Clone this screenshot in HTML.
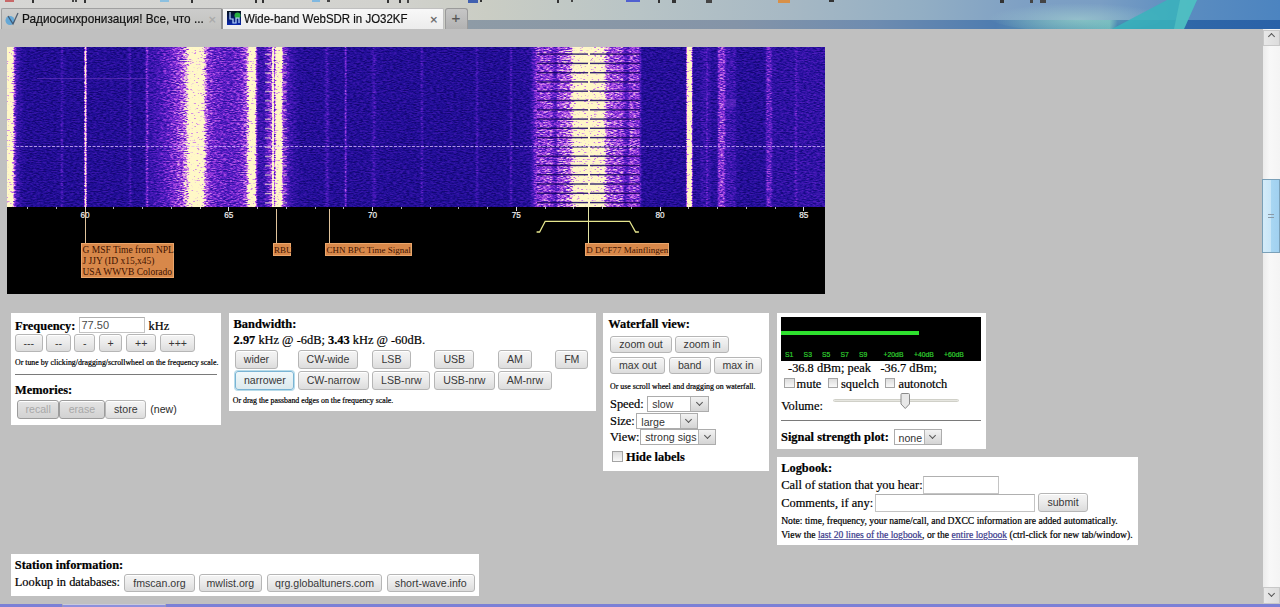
<!DOCTYPE html><html><head><meta charset="utf-8"><style>
*{margin:0;padding:0;box-sizing:border-box}
html,body{width:1280px;height:607px;overflow:hidden;background:#c0c0c0;font-family:"Liberation Serif",serif;color:#000}
.a{position:absolute}
.box{position:absolute;background:#fff}
.t{position:absolute;white-space:nowrap;line-height:1;-webkit-text-stroke:0.2px currentColor}
.btn{position:absolute;border:1px solid #b6b6b6;border-radius:3px;background:linear-gradient(#f4f4f4 0%,#ececec 45%,#dcdcdc 100%);font-family:"Liberation Sans",sans-serif;color:#383838;text-align:center;white-space:nowrap;box-shadow:inset 0 1px 0 #fff}
.dis{color:#a8a8a8;background:linear-gradient(#e4e4e4,#d2d2d2);border-color:#9c9c9c}
.foc{border-color:#79b4d4;background:linear-gradient(#f0f8fa,#dceaee);box-shadow:0 0 0 1px #b8dcea}
.inp{position:absolute;border:1px solid #c4c4c4;border-top-color:#b0b0b0;background:#fff;font-family:"Liberation Sans",sans-serif;color:#444;white-space:nowrap}
.sel{position:absolute;border:1px solid #acacac;background:#fff;font-family:"Liberation Sans",sans-serif;font-size:10.6px;color:#222;white-space:nowrap}
.sel i{position:absolute;top:0;right:0;bottom:0;border-left:1px solid #b4b4b4;background:linear-gradient(#f2f2f2,#d4d4d4)}
.chev{position:absolute;left:50%;top:50%;width:5px;height:5px;margin:-4px 0 0 -2.5px;border-right:1.5px solid #555;border-bottom:1.5px solid #555;transform:rotate(45deg)}
.cb{position:absolute;border:1px solid #a4a4a4;background:linear-gradient(#dcdcdc,#f8f8f8)}
.lab{position:absolute;background:#d8884a;border:1px solid #eaa66c;color:#401200;font-size:9px;line-height:11px;white-space:nowrap;padding-left:0.5px}
.tick{position:absolute;width:1px;background:#d8d8d8}
.lnk{color:#3a3a8c;text-decoration:underline;text-decoration-color:#7070b0}
</style></head><body>
<div class="a" style="left:0.00px;top:0.00px;width:1280.00px;height:29.00px;background:linear-gradient(to right,#d6d6d4 0%,#d2d2ce 30%,#cacdc4 38%,#b8c4c6 50%,#a6b8c4 62%,#92aec4 72%,#7ea0c4 80%,#7a9ec4 86%,#5a8cc0 93%,#4c84c0 100%)"></div>
<svg class="a" style="left:468px;top:0" width="812" height="29"><defs>
<linearGradient id="lb" x1="0" x2="1"><stop offset="0" stop-color="#8e9ba6"/><stop offset="0.33" stop-color="#8494a8"/><stop offset="0.5" stop-color="#6e8cb0"/><stop offset="0.65" stop-color="#4e7cb0"/><stop offset="0.72" stop-color="#5a98b4"/><stop offset="0.79" stop-color="#62b0b8"/><stop offset="0.8" stop-color="#3070aa"/><stop offset="0.9" stop-color="#2e66a8"/><stop offset="1" stop-color="#2a62a8"/></linearGradient>
<radialGradient id="gl" cx="0.5" cy="0.6" r="0.5"><stop offset="0" stop-color="#a8d8d0" stop-opacity="0.55"/><stop offset="1" stop-color="#a8d8d0" stop-opacity="0"/></radialGradient>
</defs>
<rect x="0" y="20" width="812" height="9" fill="url(#lb)"/>
<ellipse cx="610" cy="16" rx="90" ry="16" fill="url(#gl)"/>
<polygon points="699,0 729,0 716,29 644,29" fill="#38b4bc" opacity="0.85"/>
<polygon points="712,0 729,0 716,29 706,29" fill="#60ccc8" opacity="0.5"/>
</svg>
<div class="a" style="left:5.00px;top:0.00px;width:9.00px;height:2.00px;background:#c86868"></div>
<div class="a" style="left:32.00px;top:0.00px;width:2.00px;height:3.00px;background:#333"></div>
<div class="a" style="left:72.00px;top:0.00px;width:2.00px;height:2.00px;background:#444"></div>
<div class="a" style="left:75.00px;top:0.00px;width:2.00px;height:2.00px;background:#444"></div>
<div class="a" style="left:84.00px;top:0.00px;width:2.00px;height:3.00px;background:#333"></div>
<div class="a" style="left:160.00px;top:0.00px;width:9.00px;height:2.00px;background:#8cc0e0"></div>
<div class="a" style="left:191.00px;top:0.00px;width:2.00px;height:3.00px;background:#333"></div>
<div class="a" style="left:255.00px;top:0.00px;width:2.00px;height:3.00px;background:#333"></div>
<div class="a" style="left:262.00px;top:0.00px;width:2.00px;height:3.00px;background:#333"></div>
<div class="a" style="left:312.00px;top:0.00px;width:8.00px;height:2.00px;background:#80b8e0"></div>
<div class="a" style="left:327.00px;top:0.00px;width:3.00px;height:2.00px;background:#444"></div>
<div class="a" style="left:387.00px;top:0.00px;width:2.00px;height:3.00px;background:#333"></div>
<div class="a" style="left:399.00px;top:0.00px;width:2.00px;height:3.00px;background:#333"></div>
<div class="a" style="left:407.00px;top:0.00px;width:2.00px;height:3.00px;background:#444"></div>
<div class="a" style="left:468.00px;top:0.00px;width:10.00px;height:3.00px;background:#4060b0"></div>
<div class="a" style="left:480.00px;top:0.00px;width:2.00px;height:2.00px;background:#333"></div>
<div class="a" style="left:557.00px;top:0.00px;width:2.00px;height:3.00px;background:#333"></div>
<div class="a" style="left:571.00px;top:0.00px;width:2.00px;height:2.00px;background:#444"></div>
<div class="a" style="left:626.00px;top:0.00px;width:14.00px;height:2.00px;background:#5060d0"></div>
<div class="a" style="left:658.00px;top:0.00px;width:2.00px;height:3.00px;background:#333"></div>
<div class="a" style="left:672.00px;top:0.00px;width:4.00px;height:3.00px;background:#333"></div>
<div class="a" style="left:706.00px;top:0.00px;width:6.00px;height:3.00px;background:#444"></div>
<div class="a" style="left:778.00px;top:0.00px;width:12.00px;height:3.00px;background:#d89048"></div>
<div class="a" style="left:829.00px;top:0.00px;width:5.00px;height:2.00px;background:#333"></div>
<div class="a" style="left:1000.00px;top:0.00px;width:4.00px;height:3.00px;background:#333"></div>
<div class="a" style="left:1030.00px;top:0.00px;width:3.00px;height:3.00px;background:#444"></div>
<div class="a" style="left:1040.00px;top:0.00px;width:6.00px;height:3.00px;background:#444"></div>
<div class="a" style="left:1.00px;top:8.00px;width:222.00px;height:21.00px;background:linear-gradient(#cccccb,#c2c2c0);border:1px solid #a0a0a0;border-right:2px solid #909090;border-bottom:none;border-radius:2px 2px 0 0"></div>
<div class="a" style="left:223.00px;top:8.00px;width:221.00px;height:21.00px;background:linear-gradient(#f8f8f8,#ececec);border:1px solid #c0c0c0;border-left:none;border-bottom:none;border-radius:0 2px 0 0"></div>
<div class="a" style="left:445.00px;top:8.00px;width:23.00px;height:21.00px;background:linear-gradient(#c6c6c6,#b2b2b2);border:1px solid #9a9a9a;border-bottom:none;border-radius:3px 3px 0 0"></div>
<div class="t" style="left:21.80px;top:13.17px;font-size:12.20px;font-family:'Liberation Sans',sans-serif;color:#111;transform:scaleX(0.97);transform-origin:0 0;">Радиосинхронизация! Все, что ...</div>
<div class="t" style="left:243.70px;top:13.27px;font-size:12.20px;font-family:'Liberation Sans',sans-serif;color:#111;transform:scaleX(0.94);transform-origin:0 0;">Wide-band WebSDR in JO32KF</div>
<div class="t" style="left:208.50px;top:13.00px;font-size:13.00px;font-family:'Liberation Sans',sans-serif;color:#a8a8a8;">×</div>
<div class="t" style="left:430.00px;top:13.00px;font-size:13.00px;font-family:'Liberation Sans',sans-serif;color:#606060;">×</div>
<div class="t" style="left:451.50px;top:10.30px;font-size:15.00px;font-family:'Liberation Sans',sans-serif;color:#555;">+</div>
<svg class="a" style="left:3px;top:11px" width="17" height="15"><ellipse cx="7" cy="9.5" rx="4.5" ry="4.5" fill="#5aa4d8" opacity="0.9"/><path d="M5,5 L10,13 L15,2" stroke="#3a4a60" stroke-width="1.3" fill="none" opacity="0.85"/></svg>
<svg class="a" style="left:226.6px;top:11px" width="14" height="14"><defs><linearGradient id="fv" x1="0" y1="0" x2="0" y2="1"><stop offset="0" stop-color="#04101a"/><stop offset="1" stop-color="#0a28b0"/></linearGradient></defs><rect width="14" height="14" fill="url(#fv)"/><circle cx="10.5" cy="4.5" r="3" fill="#28b040"/><path d="M3,1 L3,8 L6,8 L6,12 L9,12 L9,7 L12,7 L12,12" stroke="#b8d8ff" stroke-width="1.2" fill="none"/></svg>
<div class="a" style="left:1263.00px;top:29.00px;width:17.00px;height:575.00px;background:linear-gradient(to right,#ececec,#f8f8f8 40%,#f4f4f4)"></div>
<div class="a" style="left:1263.00px;top:30.00px;width:17.00px;height:16.00px;background:linear-gradient(to right,#e8e8e8,#dcdcdc);border:1px solid #c8c8c8"></div>
<div class="a" style="left:1263.00px;top:587.00px;width:17.00px;height:16.50px;background:linear-gradient(to right,#e8e8e8,#dcdcdc);border:1px solid #c8c8c8"></div>
<div class="a" style="left:1262.00px;top:179.00px;width:18.00px;height:74.00px;background:linear-gradient(to right,#d4ecfa 0%,#c8e6f8 50%,#a8d6f2 51%,#a0d0f0 100%);border:1px solid #7aa0b8"></div>
<div class="chev" style="left:1271.5px;top:38px;transform:rotate(-135deg);border-color:#555"></div>
<div class="chev" style="left:1271.5px;top:595px;border-color:#555"></div>
<div class="a" style="left:0.00px;top:603.50px;width:1280.00px;height:3.50px;background:#7b80d6"></div>
<div class="a" style="left:62.00px;top:603.50px;width:104.00px;height:3.50px;background:#8c90dc;border-top:1px solid #c8c8dc;border-left:1px solid #9a9ab0;border-right:1px solid #9a9ab0"></div>
<div class="a" style="left:1268.00px;top:214.00px;width:6.00px;height:4.00px;border-top:1px solid #8a9aa8;border-bottom:1px solid #8a9aa8"></div>
<svg class="a" style="left:7px;top:47px" width="818" height="160" viewBox="0 0 818 160">
<defs><linearGradient id="wg" x1="0" y1="0" x2="818" y2="0" gradientUnits="userSpaceOnUse">
<stop offset="0.0000" stop-color="rgb(255,255,255)"/>
<stop offset="0.0061" stop-color="rgb(255,255,255)"/>
<stop offset="0.0086" stop-color="rgb(118,118,118)"/>
<stop offset="0.0122" stop-color="rgb(49,49,49)"/>
<stop offset="0.0208" stop-color="rgb(24,24,24)"/>
<stop offset="0.0648" stop-color="rgb(24,24,24)"/>
<stop offset="0.0672" stop-color="rgb(55,55,55)"/>
<stop offset="0.0697" stop-color="rgb(24,24,24)"/>
<stop offset="0.0941" stop-color="rgb(24,24,24)"/>
<stop offset="0.0954" stop-color="rgb(196,196,196)"/>
<stop offset="0.0966" stop-color="rgb(196,196,196)"/>
<stop offset="0.0978" stop-color="rgb(26,26,26)"/>
<stop offset="0.1479" stop-color="rgb(26,26,26)"/>
<stop offset="0.1504" stop-color="rgb(55,55,55)"/>
<stop offset="0.1528" stop-color="rgb(26,26,26)"/>
<stop offset="0.1687" stop-color="rgb(29,29,29)"/>
<stop offset="0.1711" stop-color="rgb(98,98,98)"/>
<stop offset="0.1736" stop-color="rgb(43,43,43)"/>
<stop offset="0.1870" stop-color="rgb(59,59,59)"/>
<stop offset="0.2017" stop-color="rgb(82,82,82)"/>
<stop offset="0.2139" stop-color="rgb(110,110,110)"/>
<stop offset="0.2200" stop-color="rgb(157,157,157)"/>
<stop offset="0.2237" stop-color="rgb(255,255,255)"/>
<stop offset="0.2384" stop-color="rgb(255,255,255)"/>
<stop offset="0.2421" stop-color="rgb(147,147,147)"/>
<stop offset="0.2457" stop-color="rgb(98,98,98)"/>
<stop offset="0.2531" stop-color="rgb(82,82,82)"/>
<stop offset="0.2702" stop-color="rgb(71,71,71)"/>
<stop offset="0.2848" stop-color="rgb(82,82,82)"/>
<stop offset="0.2922" stop-color="rgb(108,108,108)"/>
<stop offset="0.2958" stop-color="rgb(196,196,196)"/>
<stop offset="0.2971" stop-color="rgb(255,255,255)"/>
<stop offset="0.3026" stop-color="rgb(255,255,255)"/>
<stop offset="0.3050" stop-color="rgb(108,108,108)"/>
<stop offset="0.3068" stop-color="rgb(49,49,49)"/>
<stop offset="0.3142" stop-color="rgb(47,47,47)"/>
<stop offset="0.3191" stop-color="rgb(78,78,78)"/>
<stop offset="0.3233" stop-color="rgb(108,108,108)"/>
<stop offset="0.3242" stop-color="rgb(216,216,216)"/>
<stop offset="0.3258" stop-color="rgb(216,216,216)"/>
<stop offset="0.3267" stop-color="rgb(98,98,98)"/>
<stop offset="0.3289" stop-color="rgb(196,196,196)"/>
<stop offset="0.3301" stop-color="rgb(255,255,255)"/>
<stop offset="0.3350" stop-color="rgb(255,255,255)"/>
<stop offset="0.3374" stop-color="rgb(98,98,98)"/>
<stop offset="0.3460" stop-color="rgb(49,49,49)"/>
<stop offset="0.3582" stop-color="rgb(27,27,27)"/>
<stop offset="0.3875" stop-color="rgb(26,26,26)"/>
<stop offset="0.3912" stop-color="rgb(59,59,59)"/>
<stop offset="0.3949" stop-color="rgb(26,26,26)"/>
<stop offset="0.4120" stop-color="rgb(26,26,26)"/>
<stop offset="0.4144" stop-color="rgb(98,98,98)"/>
<stop offset="0.4156" stop-color="rgb(26,26,26)"/>
<stop offset="0.4450" stop-color="rgb(26,26,26)"/>
<stop offset="0.4487" stop-color="rgb(55,55,55)"/>
<stop offset="0.4523" stop-color="rgb(26,26,26)"/>
<stop offset="0.5049" stop-color="rgb(24,24,24)"/>
<stop offset="0.5073" stop-color="rgb(55,55,55)"/>
<stop offset="0.5098" stop-color="rgb(24,24,24)"/>
<stop offset="0.5721" stop-color="rgb(24,24,24)"/>
<stop offset="0.5746" stop-color="rgb(55,55,55)"/>
<stop offset="0.5770" stop-color="rgb(24,24,24)"/>
<stop offset="0.6137" stop-color="rgb(24,24,24)"/>
<stop offset="0.6161" stop-color="rgb(59,59,59)"/>
<stop offset="0.6186" stop-color="rgb(24,24,24)"/>
<stop offset="0.6394" stop-color="rgb(31,31,31)"/>
<stop offset="0.6479" stop-color="rgb(98,98,98)"/>
<stop offset="0.6638" stop-color="rgb(110,110,110)"/>
<stop offset="0.6675" stop-color="rgb(82,82,82)"/>
<stop offset="0.6711" stop-color="rgb(63,63,63)"/>
<stop offset="0.6736" stop-color="rgb(108,108,108)"/>
<stop offset="0.6883" stop-color="rgb(129,129,129)"/>
<stop offset="0.6919" stop-color="rgb(186,186,186)"/>
<stop offset="0.6956" stop-color="rgb(245,245,245)"/>
<stop offset="0.7090" stop-color="rgb(245,245,245)"/>
<stop offset="0.7103" stop-color="rgb(255,255,255)"/>
<stop offset="0.7127" stop-color="rgb(255,255,255)"/>
<stop offset="0.7139" stop-color="rgb(245,245,245)"/>
<stop offset="0.7286" stop-color="rgb(235,235,235)"/>
<stop offset="0.7323" stop-color="rgb(133,133,133)"/>
<stop offset="0.7372" stop-color="rgb(114,114,114)"/>
<stop offset="0.7518" stop-color="rgb(110,110,110)"/>
<stop offset="0.7555" stop-color="rgb(67,67,67)"/>
<stop offset="0.7592" stop-color="rgb(67,67,67)"/>
<stop offset="0.7616" stop-color="rgb(108,108,108)"/>
<stop offset="0.7726" stop-color="rgb(98,98,98)"/>
<stop offset="0.7763" stop-color="rgb(27,27,27)"/>
<stop offset="0.8301" stop-color="rgb(27,27,27)"/>
<stop offset="0.8313" stop-color="rgb(196,196,196)"/>
<stop offset="0.8325" stop-color="rgb(255,255,255)"/>
<stop offset="0.8362" stop-color="rgb(255,255,255)"/>
<stop offset="0.8386" stop-color="rgb(31,31,31)"/>
<stop offset="0.8472" stop-color="rgb(31,31,31)"/>
<stop offset="0.8496" stop-color="rgb(43,43,43)"/>
<stop offset="0.8545" stop-color="rgb(43,43,43)"/>
<stop offset="0.8557" stop-color="rgb(78,78,78)"/>
<stop offset="0.8570" stop-color="rgb(43,43,43)"/>
<stop offset="0.8594" stop-color="rgb(43,43,43)"/>
<stop offset="0.8619" stop-color="rgb(29,29,29)"/>
<stop offset="0.8680" stop-color="rgb(33,33,33)"/>
<stop offset="0.8704" stop-color="rgb(98,98,98)"/>
<stop offset="0.8765" stop-color="rgb(98,98,98)"/>
<stop offset="0.8790" stop-color="rgb(51,51,51)"/>
<stop offset="0.8900" stop-color="rgb(47,47,47)"/>
<stop offset="0.8924" stop-color="rgb(27,27,27)"/>
<stop offset="0.9267" stop-color="rgb(27,27,27)"/>
<stop offset="0.9291" stop-color="rgb(75,75,75)"/>
<stop offset="0.9340" stop-color="rgb(75,75,75)"/>
<stop offset="0.9364" stop-color="rgb(35,35,35)"/>
<stop offset="0.9621" stop-color="rgb(35,35,35)"/>
<stop offset="0.9645" stop-color="rgb(67,67,67)"/>
<stop offset="0.9670" stop-color="rgb(39,39,39)"/>
<stop offset="1.0000" stop-color="rgb(39,39,39)"/>
</linearGradient>
<filter id="wn" x="0" y="0" width="818" height="160" filterUnits="userSpaceOnUse" color-interpolation-filters="sRGB">
<feTurbulence type="fractalNoise" baseFrequency="0.3 0.9" numOctaves="2" seed="7" result="nz"/>
<feColorMatrix in="nz" type="matrix" values="2.20 0 0 0 -0.600  2.20 0 0 0 -0.600  2.20 0 0 0 -0.600  0 0 0 0 1" result="ng"/>
<feComposite in="SourceGraphic" in2="ng" operator="arithmetic" k1="0.550" k2="0.450" k3="0.080" k4="-0.040" result="d"/>
<feComponentTransfer in="d"><feFuncR type="table" tableValues="0.071 0.091 0.112 0.137 0.174 0.211 0.247 0.284 0.327 0.395 0.463 0.531 0.592 0.653 0.714 0.774 0.819 0.860 0.901 0.942 0.959 0.977 0.995 1.000 1.000 1.000 1.000 1.000 1.000 1.000 1.000 1.000 1.000 1.000 1.000 1.000 1.000 1.000 1.000 1.000 1.000"/><feFuncG type="table" tableValues="0.024 0.035 0.047 0.058 0.069 0.080 0.090 0.101 0.114 0.138 0.161 0.185 0.241 0.304 0.366 0.429 0.522 0.621 0.720 0.817 0.864 0.911 0.958 0.973 0.973 0.973 0.973 0.973 0.973 0.973 0.973 0.973 0.973 0.973 0.973 0.973 0.973 0.973 0.973 0.973 0.973"/><feFuncB type="table" tableValues="0.439 0.495 0.551 0.599 0.631 0.663 0.695 0.727 0.758 0.786 0.815 0.843 0.860 0.876 0.892 0.907 0.896 0.880 0.863 0.846 0.828 0.809 0.790 0.784 0.784 0.784 0.784 0.784 0.784 0.784 0.784 0.784 0.784 0.784 0.784 0.784 0.784 0.784 0.784 0.784 0.784"/></feComponentTransfer>
</filter>
</defs>
<rect x="0" y="0" width="818" height="160" fill="url(#wg)" filter="url(#wn)"/>
<rect x="530" y="6.4" width="51" height="1.4" fill="#120460" opacity="0.85"/>
<rect x="583" y="6.4" width="50" height="1.4" fill="#120460" opacity="0.85"/>
<rect x="530" y="15.7" width="51" height="1.4" fill="#120460" opacity="0.85"/>
<rect x="583" y="15.7" width="50" height="1.4" fill="#120460" opacity="0.85"/>
<rect x="530" y="25.0" width="51" height="1.4" fill="#120460" opacity="0.85"/>
<rect x="583" y="25.0" width="50" height="1.4" fill="#120460" opacity="0.85"/>
<rect x="530" y="34.2" width="51" height="1.4" fill="#120460" opacity="0.85"/>
<rect x="583" y="34.2" width="50" height="1.4" fill="#120460" opacity="0.85"/>
<rect x="530" y="43.5" width="51" height="1.4" fill="#120460" opacity="0.85"/>
<rect x="583" y="43.5" width="50" height="1.4" fill="#120460" opacity="0.85"/>
<rect x="530" y="52.8" width="51" height="1.4" fill="#120460" opacity="0.85"/>
<rect x="583" y="52.8" width="50" height="1.4" fill="#120460" opacity="0.85"/>
<rect x="530" y="62.1" width="51" height="1.4" fill="#120460" opacity="0.85"/>
<rect x="583" y="62.1" width="50" height="1.4" fill="#120460" opacity="0.85"/>
<rect x="530" y="71.4" width="51" height="1.4" fill="#120460" opacity="0.85"/>
<rect x="583" y="71.4" width="50" height="1.4" fill="#120460" opacity="0.85"/>
<rect x="530" y="80.6" width="51" height="1.4" fill="#120460" opacity="0.85"/>
<rect x="583" y="80.6" width="50" height="1.4" fill="#120460" opacity="0.85"/>
<rect x="530" y="89.9" width="51" height="1.4" fill="#120460" opacity="0.85"/>
<rect x="583" y="89.9" width="50" height="1.4" fill="#120460" opacity="0.85"/>
<rect x="530" y="99.2" width="51" height="1.4" fill="#120460" opacity="0.85"/>
<rect x="583" y="99.2" width="50" height="1.4" fill="#120460" opacity="0.85"/>
<rect x="530" y="108.5" width="51" height="1.4" fill="#120460" opacity="0.85"/>
<rect x="583" y="108.5" width="50" height="1.4" fill="#120460" opacity="0.85"/>
<rect x="530" y="117.8" width="51" height="1.4" fill="#120460" opacity="0.85"/>
<rect x="583" y="117.8" width="50" height="1.4" fill="#120460" opacity="0.85"/>
<rect x="530" y="127.0" width="51" height="1.4" fill="#120460" opacity="0.85"/>
<rect x="583" y="127.0" width="50" height="1.4" fill="#120460" opacity="0.85"/>
<rect x="530" y="136.3" width="51" height="1.4" fill="#120460" opacity="0.85"/>
<rect x="583" y="136.3" width="50" height="1.4" fill="#120460" opacity="0.85"/>
<rect x="530" y="145.6" width="51" height="1.4" fill="#120460" opacity="0.85"/>
<rect x="583" y="145.6" width="50" height="1.4" fill="#120460" opacity="0.85"/>
<rect x="530" y="154.9" width="51" height="1.4" fill="#120460" opacity="0.85"/>
<rect x="583" y="154.9" width="50" height="1.4" fill="#120460" opacity="0.85"/>
<rect x="258" y="6.7" width="6" height="1.4" fill="#fff4c8" opacity="0.6"/>
<rect x="276" y="6.7" width="4" height="1.4" fill="#fff4c8" opacity="0.5"/>
<rect x="258" y="16.0" width="6" height="1.4" fill="#fff4c8" opacity="0.6"/>
<rect x="276" y="16.0" width="4" height="1.4" fill="#fff4c8" opacity="0.5"/>
<rect x="258" y="25.3" width="6" height="1.4" fill="#fff4c8" opacity="0.6"/>
<rect x="276" y="25.3" width="4" height="1.4" fill="#fff4c8" opacity="0.5"/>
<rect x="258" y="34.5" width="6" height="1.4" fill="#fff4c8" opacity="0.6"/>
<rect x="276" y="34.5" width="4" height="1.4" fill="#fff4c8" opacity="0.5"/>
<rect x="258" y="43.8" width="6" height="1.4" fill="#fff4c8" opacity="0.6"/>
<rect x="276" y="43.8" width="4" height="1.4" fill="#fff4c8" opacity="0.5"/>
<rect x="258" y="53.1" width="6" height="1.4" fill="#fff4c8" opacity="0.6"/>
<rect x="276" y="53.1" width="4" height="1.4" fill="#fff4c8" opacity="0.5"/>
<rect x="258" y="62.4" width="6" height="1.4" fill="#fff4c8" opacity="0.6"/>
<rect x="276" y="62.4" width="4" height="1.4" fill="#fff4c8" opacity="0.5"/>
<rect x="258" y="71.7" width="6" height="1.4" fill="#fff4c8" opacity="0.6"/>
<rect x="276" y="71.7" width="4" height="1.4" fill="#fff4c8" opacity="0.5"/>
<rect x="258" y="80.9" width="6" height="1.4" fill="#fff4c8" opacity="0.6"/>
<rect x="276" y="80.9" width="4" height="1.4" fill="#fff4c8" opacity="0.5"/>
<rect x="258" y="90.2" width="6" height="1.4" fill="#fff4c8" opacity="0.6"/>
<rect x="276" y="90.2" width="4" height="1.4" fill="#fff4c8" opacity="0.5"/>
<rect x="258" y="99.5" width="6" height="1.4" fill="#fff4c8" opacity="0.6"/>
<rect x="276" y="99.5" width="4" height="1.4" fill="#fff4c8" opacity="0.5"/>
<rect x="258" y="108.8" width="6" height="1.4" fill="#fff4c8" opacity="0.6"/>
<rect x="276" y="108.8" width="4" height="1.4" fill="#fff4c8" opacity="0.5"/>
<rect x="258" y="118.1" width="6" height="1.4" fill="#fff4c8" opacity="0.6"/>
<rect x="276" y="118.1" width="4" height="1.4" fill="#fff4c8" opacity="0.5"/>
<rect x="258" y="127.3" width="6" height="1.4" fill="#fff4c8" opacity="0.6"/>
<rect x="276" y="127.3" width="4" height="1.4" fill="#fff4c8" opacity="0.5"/>
<rect x="258" y="136.6" width="6" height="1.4" fill="#fff4c8" opacity="0.6"/>
<rect x="276" y="136.6" width="4" height="1.4" fill="#fff4c8" opacity="0.5"/>
<rect x="258" y="145.9" width="6" height="1.4" fill="#fff4c8" opacity="0.6"/>
<rect x="276" y="145.9" width="4" height="1.4" fill="#fff4c8" opacity="0.5"/>
<rect x="258" y="155.2" width="6" height="1.4" fill="#fff4c8" opacity="0.6"/>
<rect x="276" y="155.2" width="4" height="1.4" fill="#fff4c8" opacity="0.5"/>
<line x1="0" y1="99.5" x2="818" y2="99.5" stroke="#e0c0ff" stroke-width="1.2" stroke-dasharray="3 1.5" opacity="0.75"/>
<rect x="718" y="52" width="11" height="8" fill="#7a38d0" opacity="0.35"/>
<rect x="30" y="31" width="110" height="1" fill="#8040d0" opacity="0.5"/>
</svg>
<div class="a" style="left:7.00px;top:207.00px;width:818.00px;height:87.00px;background:#000"></div>
<div class="tick" style="left:27.0px;top:207px;height:2px;background:#b0b0b0"></div>
<div class="tick" style="left:55.8px;top:207px;height:2px;background:#b0b0b0"></div>
<div class="tick" style="left:84.5px;top:207px;height:4px"></div>
<div class="t" style="left:80.40px;top:211.76px;font-size:8.20px;font-family:'Liberation Sans',sans-serif;color:#f0f0f0;">60</div>
<div class="tick" style="left:113.2px;top:207px;height:2px;background:#b0b0b0"></div>
<div class="tick" style="left:142.0px;top:207px;height:2px;background:#b0b0b0"></div>
<div class="tick" style="left:170.8px;top:207px;height:2px;background:#b0b0b0"></div>
<div class="tick" style="left:199.5px;top:207px;height:2px;background:#b0b0b0"></div>
<div class="tick" style="left:228.2px;top:207px;height:4px"></div>
<div class="t" style="left:224.15px;top:211.76px;font-size:8.20px;font-family:'Liberation Sans',sans-serif;color:#f0f0f0;">65</div>
<div class="tick" style="left:257.0px;top:207px;height:2px;background:#b0b0b0"></div>
<div class="tick" style="left:285.8px;top:207px;height:2px;background:#b0b0b0"></div>
<div class="tick" style="left:314.5px;top:207px;height:2px;background:#b0b0b0"></div>
<div class="tick" style="left:343.2px;top:207px;height:2px;background:#b0b0b0"></div>
<div class="tick" style="left:372.0px;top:207px;height:4px"></div>
<div class="t" style="left:367.90px;top:211.76px;font-size:8.20px;font-family:'Liberation Sans',sans-serif;color:#f0f0f0;">70</div>
<div class="tick" style="left:400.8px;top:207px;height:2px;background:#b0b0b0"></div>
<div class="tick" style="left:429.5px;top:207px;height:2px;background:#b0b0b0"></div>
<div class="tick" style="left:458.2px;top:207px;height:2px;background:#b0b0b0"></div>
<div class="tick" style="left:487.0px;top:207px;height:2px;background:#b0b0b0"></div>
<div class="tick" style="left:515.8px;top:207px;height:4px"></div>
<div class="t" style="left:511.65px;top:211.76px;font-size:8.20px;font-family:'Liberation Sans',sans-serif;color:#f0f0f0;">75</div>
<div class="tick" style="left:544.5px;top:207px;height:2px;background:#b0b0b0"></div>
<div class="tick" style="left:573.2px;top:207px;height:2px;background:#b0b0b0"></div>
<div class="tick" style="left:602.0px;top:207px;height:2px;background:#b0b0b0"></div>
<div class="tick" style="left:630.8px;top:207px;height:2px;background:#b0b0b0"></div>
<div class="tick" style="left:659.5px;top:207px;height:4px"></div>
<div class="t" style="left:655.40px;top:211.76px;font-size:8.20px;font-family:'Liberation Sans',sans-serif;color:#f0f0f0;">80</div>
<div class="tick" style="left:688.2px;top:207px;height:2px;background:#b0b0b0"></div>
<div class="tick" style="left:717.0px;top:207px;height:2px;background:#b0b0b0"></div>
<div class="tick" style="left:745.8px;top:207px;height:2px;background:#b0b0b0"></div>
<div class="tick" style="left:774.5px;top:207px;height:2px;background:#b0b0b0"></div>
<div class="tick" style="left:803.2px;top:207px;height:4px"></div>
<div class="t" style="left:799.15px;top:211.76px;font-size:8.20px;font-family:'Liberation Sans',sans-serif;color:#f0f0f0;">85</div>
<div class="a" style="left:84.50px;top:209.00px;width:1.10px;height:34.00px;background:#e0c49c"></div>
<div class="a" style="left:276.00px;top:209.00px;width:1.10px;height:34.00px;background:#e0c49c"></div>
<div class="a" style="left:328.90px;top:209.00px;width:1.10px;height:34.00px;background:#e0c49c"></div>
<div class="a" style="left:587.90px;top:207.00px;width:1.10px;height:36.00px;background:#e4e4a4"></div>
<svg class="a" style="left:530px;top:215px" width="115" height="22"><polyline points="6.6,17 9.6,17 15.2,6.3 99.6,6.3 105.6,17 108.9,17" fill="none" stroke="#e6e68e" stroke-width="1.3"/></svg>
<div class="lab" style="left:81px;top:243px;width:93px;height:35px;padding-top:0.5px;font-size:9.5px;line-height:11.2px">G MSF Time from NPL<br>J JJY (ID x15,x45)<br>USA WWVB Colorado</div>
<div class="lab" style="left:272.5px;top:242.8px;width:18.8px;height:12.8px;padding-top:1px">RBU</div>
<div class="lab" style="left:325px;top:242.8px;width:87px;height:12.8px;padding-top:1px">CHN BPC Time Signal</div>
<div class="lab" style="left:584.8px;top:242.8px;width:84.6px;height:12.8px;padding-top:1px">D DCF77 Mainflingen</div>
<div class="a" style="left:11.00px;top:313.00px;width:210.00px;height:112.00px;background:#fff"></div>
<div class="a" style="left:229.00px;top:313.00px;width:366.50px;height:98.00px;background:#fff"></div>
<div class="a" style="left:603.00px;top:313.00px;width:166.00px;height:158.00px;background:#fff"></div>
<div class="a" style="left:777.00px;top:313.00px;width:208.50px;height:136.00px;background:#fff"></div>
<div class="a" style="left:777.00px;top:457.00px;width:361.00px;height:88.00px;background:#fff"></div>
<div class="a" style="left:11.00px;top:554.00px;width:468.00px;height:42.00px;background:#fff"></div>
<div class="t" style="left:15.00px;top:320.12px;font-size:12.40px;font-weight:bold;">Frequency:</div>
<div class="inp" style="left:78.5px;top:317.1px;width:66.5px;height:16.4px;font-size:11px;line-height:15.6px;padding-left:2px;color:#4a4a4a">77.50</div>
<div class="t" style="left:148.50px;top:319.51px;font-size:12.40px;">kHz</div>
<div class="btn" style="left:15.00px;top:334.20px;width:27.70px;height:18.30px;line-height:16.30px;font-size:10.60px;">---</div>
<div class="btn" style="left:46.20px;top:334.20px;width:24.70px;height:18.30px;line-height:16.30px;font-size:10.60px;">--</div>
<div class="btn" style="left:74.20px;top:334.20px;width:21.00px;height:18.30px;line-height:16.30px;font-size:10.60px;">-</div>
<div class="btn" style="left:98.70px;top:334.20px;width:23.60px;height:18.30px;line-height:16.30px;font-size:10.60px;">+</div>
<div class="btn" style="left:126.30px;top:334.20px;width:29.90px;height:18.30px;line-height:16.30px;font-size:10.60px;">++</div>
<div class="btn" style="left:160.20px;top:334.20px;width:35.10px;height:18.30px;line-height:16.30px;font-size:10.60px;">+++</div>
<div class="t" style="left:15.00px;top:358.63px;font-size:7.85px;">Or tune by clicking/dragging/scrollwheel on the frequency scale.</div>
<div class="a" style="left:15.00px;top:373.60px;width:202.00px;height:1.10px;background:#7a7a7a"></div>
<div class="t" style="left:15.00px;top:383.62px;font-size:12.40px;font-weight:bold;">Memories:</div>
<div class="btn dis" style="left:17.00px;top:400.20px;width:42.30px;height:18.40px;line-height:16.40px;font-size:10.60px;">recall</div>
<div class="btn dis" style="left:59.30px;top:400.20px;width:45.30px;height:18.40px;line-height:16.40px;font-size:10.60px;">erase</div>
<div class="btn" style="left:105.20px;top:400.20px;width:41.20px;height:18.40px;line-height:16.40px;font-size:10.60px;">store</div>
<div class="t" style="left:150.30px;top:403.73px;font-size:10.60px;font-family:'Liberation Sans',sans-serif;color:#2a2a2a;-webkit-text-stroke:0;">(new)</div>
<div class="t" style="left:233.60px;top:318.31px;font-size:12.40px;font-weight:bold;">Bandwidth:</div>
<div class="t" style="left:233.60px;top:334.12px;font-size:12.40px;"><b>2.97</b> kHz @ -6dB; <b>3.43</b> kHz @ -60dB.</div>
<div class="btn" style="left:235.40px;top:350.20px;width:42.20px;height:18.40px;line-height:16.40px;font-size:10.60px;">wider</div>
<div class="btn" style="left:298.00px;top:350.20px;width:59.80px;height:18.40px;line-height:16.40px;font-size:10.60px;">CW-wide</div>
<div class="btn" style="left:372.30px;top:350.20px;width:38.30px;height:18.40px;line-height:16.40px;font-size:10.60px;">LSB</div>
<div class="btn" style="left:434.10px;top:350.20px;width:40.40px;height:18.40px;line-height:16.40px;font-size:10.60px;">USB</div>
<div class="btn" style="left:498.30px;top:350.20px;width:33.40px;height:18.40px;line-height:16.40px;font-size:10.60px;">AM</div>
<div class="btn" style="left:555.20px;top:350.20px;width:33.20px;height:18.40px;line-height:16.40px;font-size:10.60px;">FM</div>
<div class="btn foc" style="left:235.40px;top:371.20px;width:58.90px;height:18.50px;line-height:16.50px;font-size:10.60px;">narrower</div>
<div class="btn" style="left:298.00px;top:371.20px;width:70.70px;height:18.50px;line-height:16.50px;font-size:10.60px;">CW-narrow</div>
<div class="btn" style="left:372.30px;top:371.20px;width:58.20px;height:18.50px;line-height:16.50px;font-size:10.60px;">LSB-nrw</div>
<div class="btn" style="left:434.10px;top:371.20px;width:60.50px;height:18.50px;line-height:16.50px;font-size:10.60px;">USB-nrw</div>
<div class="btn" style="left:498.30px;top:371.20px;width:53.30px;height:18.50px;line-height:16.50px;font-size:10.60px;">AM-nrw</div>
<div class="t" style="left:232.80px;top:396.83px;font-size:7.85px;">Or drag the passband edges on the frequency scale.</div>
<div class="t" style="left:608.30px;top:317.81px;font-size:12.40px;font-weight:bold;">Waterfall view:</div>
<div class="btn" style="left:610.30px;top:335.50px;width:61.40px;height:17.20px;line-height:15.20px;font-size:10.60px;">zoom out</div>
<div class="btn" style="left:675.20px;top:335.50px;width:53.90px;height:17.20px;line-height:15.20px;font-size:10.60px;">zoom in</div>
<div class="btn" style="left:610.30px;top:356.60px;width:55.10px;height:17.60px;line-height:15.60px;font-size:10.60px;">max out</div>
<div class="btn" style="left:668.60px;top:356.60px;width:42.20px;height:17.60px;line-height:15.60px;font-size:10.60px;">band</div>
<div class="btn" style="left:714.20px;top:356.60px;width:47.60px;height:17.60px;line-height:15.60px;font-size:10.60px;">max in</div>
<div class="t" style="left:610.00px;top:382.63px;font-size:7.85px;">Or use scroll wheel and dragging on waterfall.</div>
<div class="t" style="left:610.00px;top:397.92px;font-size:12.40px;">Speed:</div>
<div class="sel" style="left:647.20px;top:396.20px;width:61.80px;height:15.80px;line-height:13.80px;padding-left:4px"><span style="position:relative;top:1px;color:#333">slow</span><i style="width:17.80px"><b class="chev"></b></i></div>
<div class="t" style="left:610.00px;top:414.51px;font-size:12.40px;">Size:</div>
<div class="sel" style="left:636.30px;top:412.50px;width:61.60px;height:16.00px;line-height:14.00px;padding-left:4px"><span style="position:relative;top:1px;color:#333">large</span><i style="width:17.10px"><b class="chev"></b></i></div>
<div class="t" style="left:610.00px;top:430.72px;font-size:12.40px;">View:</div>
<div class="sel" style="left:640.30px;top:429.30px;width:76.10px;height:15.30px;line-height:13.30px;padding-left:4px"><span style="position:relative;top:1px;color:#333">strong sigs</span><i style="width:17.40px"><b class="chev"></b></i></div>
<div class="cb" style="left:612.20px;top:451.00px;width:11.20px;height:11.00px"></div>
<div class="t" style="left:626.00px;top:451.31px;font-size:12.40px;font-weight:bold;">Hide labels</div>
<div class="a" style="left:780.60px;top:316.70px;width:200.00px;height:43.90px;background:#000"></div>
<div class="a" style="left:780.60px;top:331.30px;width:138.80px;height:3.70px;background:#2ee02e"></div>
<div class="t" style="left:784.90px;top:351.74px;font-size:6.80px;font-family:'Liberation Sans',sans-serif;color:#30d030;">S1</div>
<div class="t" style="left:803.60px;top:351.74px;font-size:6.80px;font-family:'Liberation Sans',sans-serif;color:#30d030;">S3</div>
<div class="t" style="left:822.00px;top:351.74px;font-size:6.80px;font-family:'Liberation Sans',sans-serif;color:#30d030;">S5</div>
<div class="t" style="left:840.40px;top:351.74px;font-size:6.80px;font-family:'Liberation Sans',sans-serif;color:#30d030;">S7</div>
<div class="t" style="left:858.90px;top:351.74px;font-size:6.80px;font-family:'Liberation Sans',sans-serif;color:#30d030;">S9</div>
<div class="t" style="left:883.60px;top:351.74px;font-size:6.80px;font-family:'Liberation Sans',sans-serif;color:#30d030;">+20dB</div>
<div class="t" style="left:914.00px;top:351.74px;font-size:6.80px;font-family:'Liberation Sans',sans-serif;color:#30d030;">+40dB</div>
<div class="t" style="left:944.00px;top:351.74px;font-size:6.80px;font-family:'Liberation Sans',sans-serif;color:#30d030;">+60dB</div>
<div class="t" style="left:788.00px;top:361.62px;font-size:12.40px;">-36.8 dBm; peak</div>
<div class="t" style="left:880.40px;top:361.62px;font-size:12.40px;">-36.7 dBm;</div>
<div class="cb" style="left:784.00px;top:377.80px;width:10.70px;height:10.40px"></div>
<div class="t" style="left:796.60px;top:378.12px;font-size:12.40px;">mute</div>
<div class="cb" style="left:827.60px;top:377.80px;width:10.40px;height:10.40px"></div>
<div class="t" style="left:841.00px;top:378.12px;font-size:12.40px;">squelch</div>
<div class="cb" style="left:885.30px;top:377.80px;width:9.40px;height:10.40px"></div>
<div class="t" style="left:898.40px;top:378.12px;font-size:12.40px;">autonotch</div>
<div class="t" style="left:781.20px;top:399.81px;font-size:12.40px;">Volume:</div>
<div class="a" style="left:833.00px;top:398.50px;width:126.00px;height:3.00px;background:linear-gradient(#d8d8d0,#f4f4f0);border-radius:2px;border:1px solid #d0d0c8"></div>
<svg class="a" style="left:900px;top:393px" width="11" height="17"><path d="M1,1.5 Q1,0.5 2,0.5 L8.5,0.5 Q9.5,0.5 9.5,1.5 L9.5,11 L5.25,15.5 L1,11 Z" fill="#e8e8e8" stroke="#8a8a8a" stroke-width="1"/></svg>
<div class="a" style="left:780.50px;top:419.50px;width:200.50px;height:1.10px;background:#7a7a7a"></div>
<div class="t" style="left:781.00px;top:430.81px;font-size:12.40px;font-weight:bold;">Signal strength plot:</div>
<div class="sel" style="left:893.50px;top:428.50px;width:48.10px;height:16.00px;line-height:14.00px;padding-left:4px"><span style="position:relative;top:1px;color:#333">none</span><i style="width:16.80px"><b class="chev"></b></i></div>
<div class="t" style="left:781.20px;top:462.42px;font-size:12.40px;font-weight:bold;">Logbook:</div>
<div class="t" style="left:781.20px;top:478.81px;font-size:12.40px;">Call of station that you hear:</div>
<div class="inp" style="left:923.2px;top:476.2px;width:76px;height:17.5px"></div>
<div class="t" style="left:781.20px;top:497.01px;font-size:12.40px;">Comments, if any:</div>
<div class="inp" style="left:874.7px;top:494.2px;width:160.3px;height:17.5px"></div>
<div class="btn" style="left:1038.20px;top:493.30px;width:49.60px;height:18.40px;line-height:16.40px;font-size:10.60px;">submit</div>
<div class="t" style="left:781.20px;top:516.26px;font-size:9.60px;">Note: time, frequency, your name/call, and DXCC information are added automatically.</div>
<div class="t" style="left:781.20px;top:529.86px;font-size:9.60px;">View the <span class="lnk">last 20 lines of the logbook</span>, or the <span class="lnk">entire logbook</span> (ctrl-click for new tab/window).</div>
<div class="t" style="left:14.75px;top:559.12px;font-size:12.40px;font-weight:bold;">Station information:</div>
<div class="t" style="left:14.75px;top:576.12px;font-size:12.40px;">Lookup in databases:</div>
<div class="btn" style="left:124.30px;top:573.50px;width:70.30px;height:18.00px;line-height:16.00px;font-size:10.60px;">fmscan.org</div>
<div class="btn" style="left:198.60px;top:573.50px;width:63.60px;height:18.00px;line-height:16.00px;font-size:10.60px;">mwlist.org</div>
<div class="btn" style="left:266.60px;top:573.50px;width:115.90px;height:18.00px;line-height:16.00px;font-size:10.60px;">qrg.globaltuners.com</div>
<div class="btn" style="left:386.50px;top:573.50px;width:88.50px;height:18.00px;line-height:16.00px;font-size:10.60px;">short-wave.info</div>
</body></html>
